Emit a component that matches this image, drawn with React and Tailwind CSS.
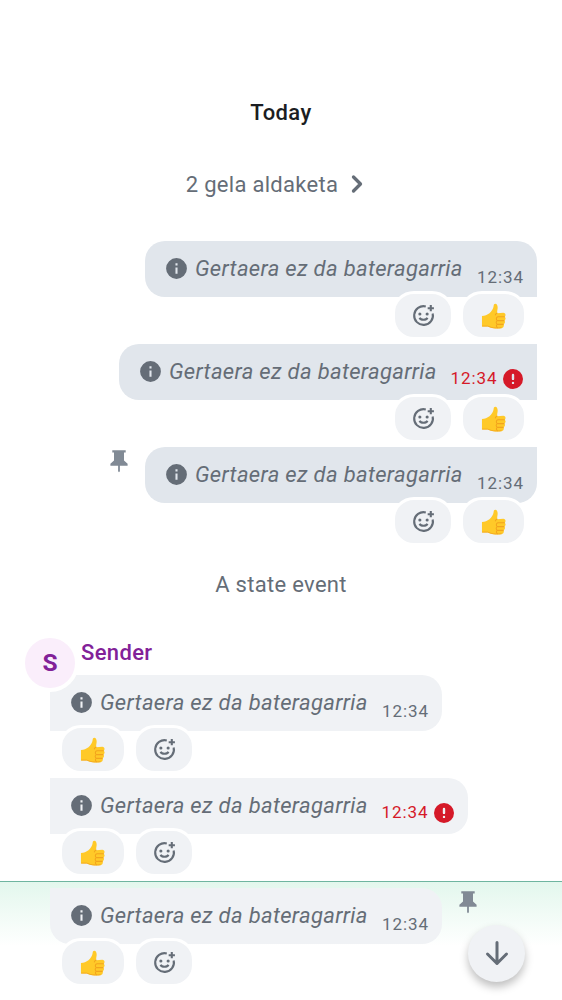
import React from "react";

const InfoIcon = () => (
  <svg viewBox="0 0 24 24" className="mb-[1px] h-[25px] w-[25px] shrink-0" fill="#656d77">
    <path fillRule="evenodd" d="M12 2a10 10 0 1 0 0 20 10 10 0 0 0 0-20Zm-1 9h2v6h-2v-6Zm0-4h2v2h-2V7Z" />
  </svg>
);

const ErrorIcon = () => (
  <svg viewBox="0 0 24 24" className="h-[24px] w-[24px] shrink-0" fill="#d51928">
    <path fillRule="evenodd" d="M12 2a10 10 0 1 0 0 20 10 10 0 0 0 0-20Zm0 4.700a1.200 1.200 0 0 1 1.200 1.200v4a1.200 1.200 0 0 1-2.400 0v-4A1.200 1.200 0 0 1 12 6.700Zm0 8a1.200 1.200 0 1 1 0 2.400 1.200 1.200 0 0 1 0-2.400Z" />
  </svg>
);

const AddReaction = () => (
  <svg viewBox="0 0 24 24" className="h-[25px] w-[25px]" fill="none" stroke="#656d77" strokeWidth="2">
    <path d="M14.2 3.300A9 9 0 1 0 20.800 10" />
    <path d="M19 2v6M16 5h6" />
    <path d="M8.200 14.200c1.200 2.600 6.400 2.600 7.600 0" />
    <circle cx="8.500" cy="10.500" r="1.500" fill="#656d77" stroke="none" />
    <circle cx="15.500" cy="10.500" r="1.500" fill="#656d77" stroke="none" />
  </svg>
);

const Thumb = () => (
  <svg viewBox="0 0 26 28" className="mt-[1px] mr-[1px] h-[27px] w-[25px]">
    <path fill="#ffc928" d="M1 13.600C4 13 6.500 12.300 8.800 10.500c2.200-1.900 3.900-4.500 4.300-7.200.2-1.700.7-2.500 1.800-2.500 1.900 0 2.600 2.500 2.400 4.700-.2 1.700-.6 3.400-.6 5l6.500-.3c2.400.1 2.900 2.600 1.500 4 1.300 1.200 1.100 3.200-.2 4 .8 1.400.4 3-.9 3.700.6 1.700-.3 3.900-2.200 4.200-3 .6-8 .6-11-.3L7 24.300H1Z" />
    <path fill="none" stroke="#f2a41d" strokeWidth="1.100" strokeLinecap="round" d="M16.700 10.500c-1 .3-1.600 1-1.800 1.800M17.500 14.300h6.800M17 18.300h6.800M17 22.200h6M17.500 14.300c-2 .6-2 3-.5 4-1.700.8-1.500 3 0 3.900-1.300.6-1.300 2.300 0 3.400" />
    <path fill="none" stroke="#f2a41d" strokeWidth=".8" d="M1.200 24H7l3.500 1.300c3 .8 7.500.8 10.800.3" />
  </svg>
);

const Pin = ({ className }) => (
  <svg viewBox="0 0 18 23" className={"h-[23px] w-[18px] shrink-0 " + className} fill="#818a95">
    <path d="M2.300.300h13.400v2.200h-1.700v8l3.600 3.300v2H9.900v5.400L9 22.300l-.9-1.100v-5.400H.4v-2L4 10.500v-8H2.300Z" />
  </svg>
);

function Bubble({ own, error, shape }) {
  const tone = own ? "bg-[#e1e6ec]" : "bg-[#f0f2f5]";
  return (
    <div className={`flex h-[56px] ${error ? "w-[418px]" : "w-[392px]"} pl-[19px] pr-[13px] ${tone} ${shape}`}>
      <div className="flex items-center">
        <InfoIcon />
        <span className="ml-[6px] whitespace-nowrap text-[22px] leading-[30px] tracking-[0.33px] text-[#656d77] italic">Gertaera ez da bateragarria</span>
      </div>
      <div className={`ml-auto flex h-[24px] items-center text-[17px] tracking-[0.95px] ${error ? "mt-[23px] mr-[-1px] text-[#d51928]" : "mt-[25px] text-[#656d77]"}`}>
        <span>12:34</span>
        {error && <span className="ml-[3.5px]"><ErrorIcon /></span>}
      </div>
    </div>
  );
}

function Reactions({ own }) {
  const base = "box-content flex h-[43px] items-center justify-center rounded-[22px] border-[3px] border-white bg-[#f0f2f5]";
  return (
    <div className={`relative -mt-[6px] flex h-[49px] gap-[6px] ${own ? "flex-row-reverse pr-[10px]" : "pl-[9px]"}`}>
      <div className={`${base} ${own ? "w-[61px]" : "w-[62px]"}`}><Thumb /></div>
      <div className={`${base} w-[56px]`}><AddReaction /></div>
    </div>
  );
}

export default function App() {
  return (
    <div className="h-[1000px] w-[562px] overflow-hidden bg-white font-['Roboto',sans-serif]">
      <div className="flex flex-col items-center pt-[98px]">
        <h1 className="text-[22px] leading-[30px] font-medium tracking-[0.4px] text-[#1b1d22]">Today</h1>
        <div className="mt-[41px] flex h-[30px] items-center pr-[13px] text-[22px] tracking-[0.28px] text-[#656d77]">
          <span className="ml-[1px]">2 gela aldaketa</span>
          <svg viewBox="0 0 14 20" className="ml-[12px] h-[20px] w-[14px]" fill="none" stroke="#656d77" strokeWidth="3.300" strokeLinecap="round" strokeLinejoin="round"><path d="M3.500 3l7 7-7 7" /></svg>
        </div>
      </div>
      <div className="mt-[42px] flex flex-col items-end pr-[25px]">
        <Bubble own shape="rounded-[20px] rounded-br-none" />
        <Reactions own />
        <div className="mt-[4px]"><Bubble own error shape="rounded-l-[20px]" /></div>
        <Reactions own />
        <div className="mt-[4px] flex">
          <Pin className="mt-[3px] mr-[17.5px]" />
          <Bubble own shape="rounded-[20px] rounded-tr-none" />
        </div>
        <Reactions own />
      </div>
      <p className="mt-[24px] text-center text-[22px] leading-[30px] tracking-[0.3px] text-[#656d77]">A state event</p>
      <div className="relative z-10 mt-[34px] ml-[21px] flex h-[41px]">
        <div className="box-content flex h-[50px] w-[50px] shrink-0 items-center justify-center rounded-full border-[4px] border-white bg-[#faeefb] text-[24.5px] font-bold text-[#822198]">S</div>
        <div className="ml-[2px] mt-[4px] text-[22px] leading-[30px] font-medium tracking-[0.35px] text-[#822198]">Sender</div>
      </div>
      <div className="flex flex-col pl-[50px]">
        <Bubble shape="rounded-r-[20px]" />
        <Reactions />
        <div className="mt-[4px]"><Bubble error shape="rounded-r-[20px]" /></div>
        <Reactions />
      </div>
      <div className="relative mt-[4px] h-[119px] border-t border-[#6fb5a0] bg-linear-to-b from-[#e3f7ed] to-white to-[64px] pt-[6px] pl-[50px]">
        <div className="flex">
          <Bubble shape="rounded-[20px] rounded-tl-none" />
          <Pin className="mt-[3px] ml-[17px]" />
        </div>
        <Reactions />
        <button className="absolute top-[43px] left-[468px] flex h-[57px] w-[57px] items-center justify-center rounded-full bg-[#f0f2f5] shadow-[0_5px_9px_rgba(0,0,0,0.25)]">
          <svg viewBox="0 0 24 26" className="mb-[1px] h-[26px] w-[24px]" fill="none" stroke="#656d77" strokeWidth="3" strokeLinecap="round" strokeLinejoin="round"><path d="M12 2.500v21M2.500 14l9.500 9.500 9.500-9.500" /></svg>
        </button>
      </div>
    </div>
  );
}
